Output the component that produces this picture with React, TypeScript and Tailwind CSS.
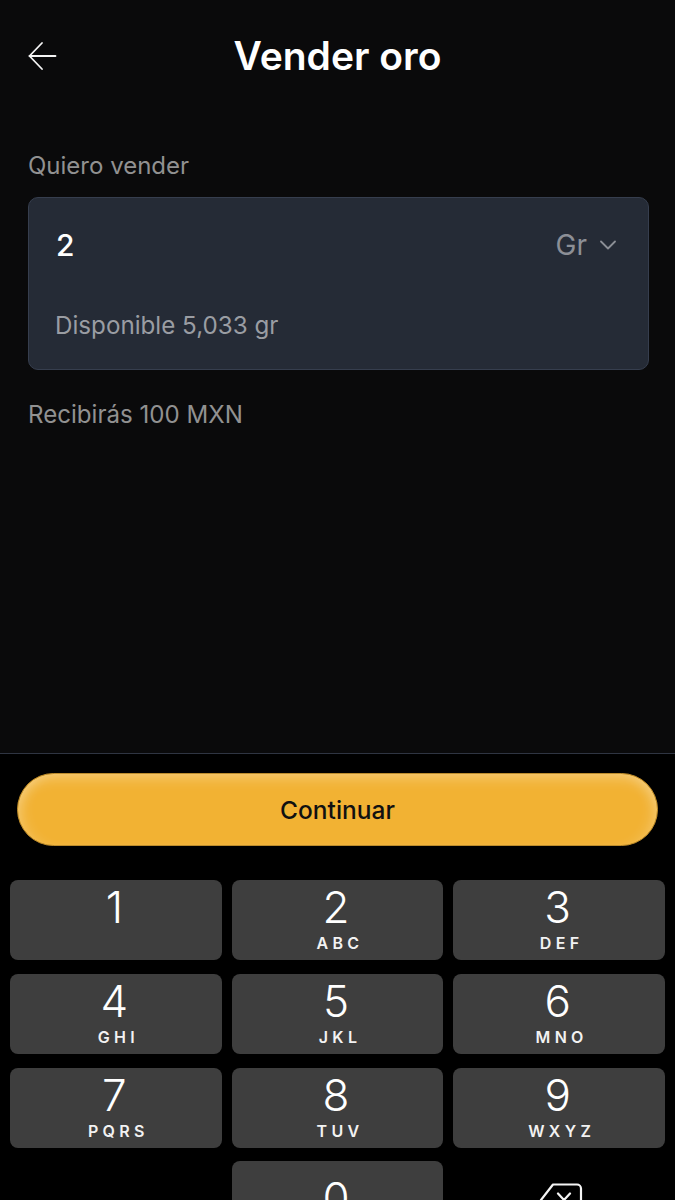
// App.tsx
import React from 'react';

const KEYS = [
  { digit: '1', letters: '' },
  { digit: '2', letters: 'ABC' },
  { digit: '3', letters: 'DEF' },
  { digit: '4', letters: 'GHI' },
  { digit: '5', letters: 'JKL' },
  { digit: '6', letters: 'MNO' },
  { digit: '7', letters: 'PQRS' },
  { digit: '8', letters: 'TUV' },
  { digit: '9', letters: 'WXYZ' },
];

const Key: React.FC<{ digit: string; letters: string }> = ({ digit, letters }) => (
  <div className="h-[80px] rounded-[8px] bg-[#3e3e3e] flex flex-col items-center text-white">
    <span className="mt-[2px] h-[50px] text-[44px] leading-[50px] font-light pr-[3px]">{digit}</span>
    <span className="mt-[1px] pl-[5px] text-[16px] leading-[20px] font-semibold tracking-[0.27em] text-[#f2f2f2]">{letters}</span>
  </div>
);

const App: React.FC = () => {
  return (
    <div className="h-[1200px] overflow-hidden bg-black font-['Inter',sans-serif] flex flex-col">
      <div className="h-[754px] shrink-0 bg-[#0a0a0b] border-b border-[#2f3542] pl-[28px] pr-[26px]">
        <div className="relative h-[112px] flex items-center justify-center pr-[2px]">
          <svg className="absolute left-0 top-[41px]" width="30" height="30" viewBox="0 0 30 30" fill="none" stroke="#f5f5f5" strokeWidth="1.8" strokeLinecap="round" strokeLinejoin="round">
            <path d="M1.5 15H27.5" />
            <path d="M14 2L1.5 15L14 28" />
          </svg>
          <h1 className="text-[39px] leading-[44px] font-semibold text-white">Vender oro</h1>
        </div>
        <p className="mt-[40px] text-[24px] leading-[28px] text-[#919191]">Quiero vender</p>
        <div className="mt-[17px] h-[173px] rounded-[10px] bg-[#252b36] border border-[#363e4e] pl-[27px] pr-[27px] flex flex-col">
          <div className="mt-[29px] flex items-center justify-between h-[36px]">
            <span className="text-[30px] leading-[36px] font-medium text-white">2</span>
            <span className="flex items-center gap-[13px] pr-[5px] text-[28px] leading-[36px] text-[#8c8f96]">
              Gr
              <svg width="16" height="10" viewBox="0 0 16 10" fill="none" stroke="#8c8f96" strokeWidth="1.8" strokeLinecap="round" strokeLinejoin="round">
                <path d="M1 1.5L8 8.5L15 1.5" />
              </svg>
            </span>
          </div>
          <p className="mt-[49px] -ml-[1px] text-[24.2px] leading-[28px] text-[#9a9da3]">Disponible 5,033 gr</p>
        </div>
        <p className="mt-[31px] text-[24.1px] leading-[28px] text-[#919191]">Recibirás 100 MXN</p>
      </div>
      <div className="px-[17px] pt-[19px]">
        <button className="w-full h-[73px] rounded-full bg-[#f2b233] border border-[#bd8c2c] pt-[2px] shadow-[inset_0_8px_14px_-4px_rgba(255,255,255,0.3),inset_12px_0_14px_-8px_rgba(255,255,255,0.2),inset_-12px_0_14px_-8px_rgba(255,255,255,0.2)] text-[24.5px] font-medium text-[#111]">
          Continuar
        </button>
      </div>
      <div className="mt-[34px] px-[10px] grid grid-cols-3 gap-x-[10px] gap-y-[13.8px]">
        {KEYS.map((k) => (
          <Key key={k.digit} digit={k.digit} letters={k.letters} />
        ))}
        <div />
        <div className="h-[80px] rounded-[8px] bg-[#3e3e3e] flex justify-center text-white">
          <span className="mt-[12px] h-[50px] text-[44px] leading-[50px] font-light pr-[3px]">0</span>
        </div>
        <div className="flex justify-center pt-[22px] pl-[3px]">
          <svg width="44" height="34" viewBox="0 0 44 34" fill="none" stroke="#f5f5f5" strokeWidth="2.2" strokeLinecap="round" strokeLinejoin="round">
            <path d="M14 1.5H38A4 4 0 0 1 42 5.5V28.5A4 4 0 0 1 38 32.5H14L2 17Z" />
            <path d="M19 10.5L31 23.5M31 10.5L19 23.5" />
          </svg>
        </div>
      </div>
    </div>
  );
};

export default App;
